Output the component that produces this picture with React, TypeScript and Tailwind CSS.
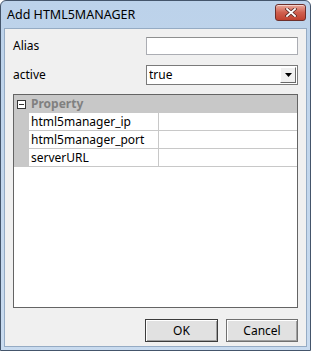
import { useState } from "react";

const rows = ["html5manager_ip", "html5manager_port", "serverURL"];

export default function App() {
  const [alias, setAlias] = useState("");
  const [active, setActive] = useState("true");

  return (
    <div className="w-[311px] h-[351px] flex flex-col bg-gradient-to-b from-[#bcd2ea] to-[#c9dbef] border border-[#44556b] rounded-t-[6px] overflow-hidden font-['Noto_Sans',sans-serif] text-[12px] text-black">
      {/* title bar */}
      <div className="h-[27px] flex items-center justify-between pl-[6px] pr-[4px] shrink-0">
        <span className="text-[12.5px] leading-none pt-[1px]">Add HTML5MANAGER</span>
        <button className="shrink-0 w-[31px] h-[17px] mb-[5px] rounded-[3px] border border-[#6d2f2b] bg-gradient-to-b from-[#e8a89c] via-[#d0604f] to-[#c0412f] shadow-[inset_0_1px_0_rgba(255,255,255,0.5)] flex items-center justify-center">
          <svg width="12" height="9" viewBox="0 0 12 9">
            <path d="M2 1 L10 8 M10 1 L2 8" stroke="#5a2a26" strokeWidth="3.4" strokeLinecap="square" />
            <path d="M2 1 L10 8 M10 1 L2 8" stroke="#ffffff" strokeWidth="1.8" strokeLinecap="square" />
          </svg>
        </button>
      </div>

      {/* client area */}
      <div className="flex-1 mx-[3px] mb-[3px] bg-[#f0f0f0] border border-[#95abc4] flex flex-col px-[8px]">
        <div className="mt-[8px] flex items-center justify-between">
          <span>Alias</span>
          <input
            value={alias}
            onChange={(e) => setAlias(e.target.value)}
            className="w-[152px] h-[18px] bg-white border border-[#abadb3] border-t-[#8e8f8f] outline-none px-[2px] text-[12px]"
          />
        </div>

        <div className="mt-[10px] flex items-center justify-between">
          <span>active</span>
          <div className="w-[152px] h-[20px] bg-white border border-[#7a7a7a] flex items-center relative">
            <select
              value={active}
              onChange={(e) => setActive(e.target.value)}
              className="appearance-none w-full h-full bg-transparent outline-none pl-[2px] text-[12px]"
            >
              <option value="true">true</option>
              <option value="false">false</option>
            </select>
            <div className="absolute right-[1px] top-[1px] w-[16px] h-[16px] bg-[#f0f0f0] border border-[#ffffff] border-r-[#696969] border-b-[#696969] flex items-center justify-center pointer-events-none">
              <svg width="7" height="4" viewBox="0 0 7 4">
                <path d="M0 0 H7 L3.5 4 Z" fill="#000" />
              </svg>
            </div>
          </div>
        </div>

        {/* property grid */}
        <div className="mt-[9px] h-[214px] border border-[#646464] bg-white flex flex-col">
          <div className="h-[18px] bg-[#c8c8c8] flex items-center">
            <div className="w-[15px] flex items-center justify-center">
              <div className="w-[9px] h-[9px] border border-[#333] bg-white flex items-center justify-center">
                <div className="w-[5px] h-px bg-[#333]" />
              </div>
            </div>
            <span className="pl-[2px] font-bold text-[#808080]">Property</span>
          </div>
          {rows.map((r) => (
            <div key={r} className="h-[18px] flex border-b border-[#c8c8c8]">
              <div className="w-[15px] bg-[#c8c8c8]" />
              <div className="w-[130px] border-r border-[#c8c8c8] flex items-center pl-[2px] leading-none">{r}</div>
              <div className="flex-1" />
            </div>
          ))}
        </div>

        <div className="mt-[11px] flex justify-end gap-[8px]">
          <button className="w-[73px] h-[23px] bg-[#e1e1e1] border border-[#3c3c3c] shadow-[inset_1px_1px_0_#fff,inset_-1px_-1px_0_#a0a0a0]">
            OK
          </button>
          <button className="w-[72px] h-[23px] bg-[#e1e1e1] border border-[#707070] shadow-[inset_1px_1px_0_#fff,inset_-1px_-1px_0_#a0a0a0]">
            Cancel
          </button>
        </div>
      </div>
    </div>
  );
}
